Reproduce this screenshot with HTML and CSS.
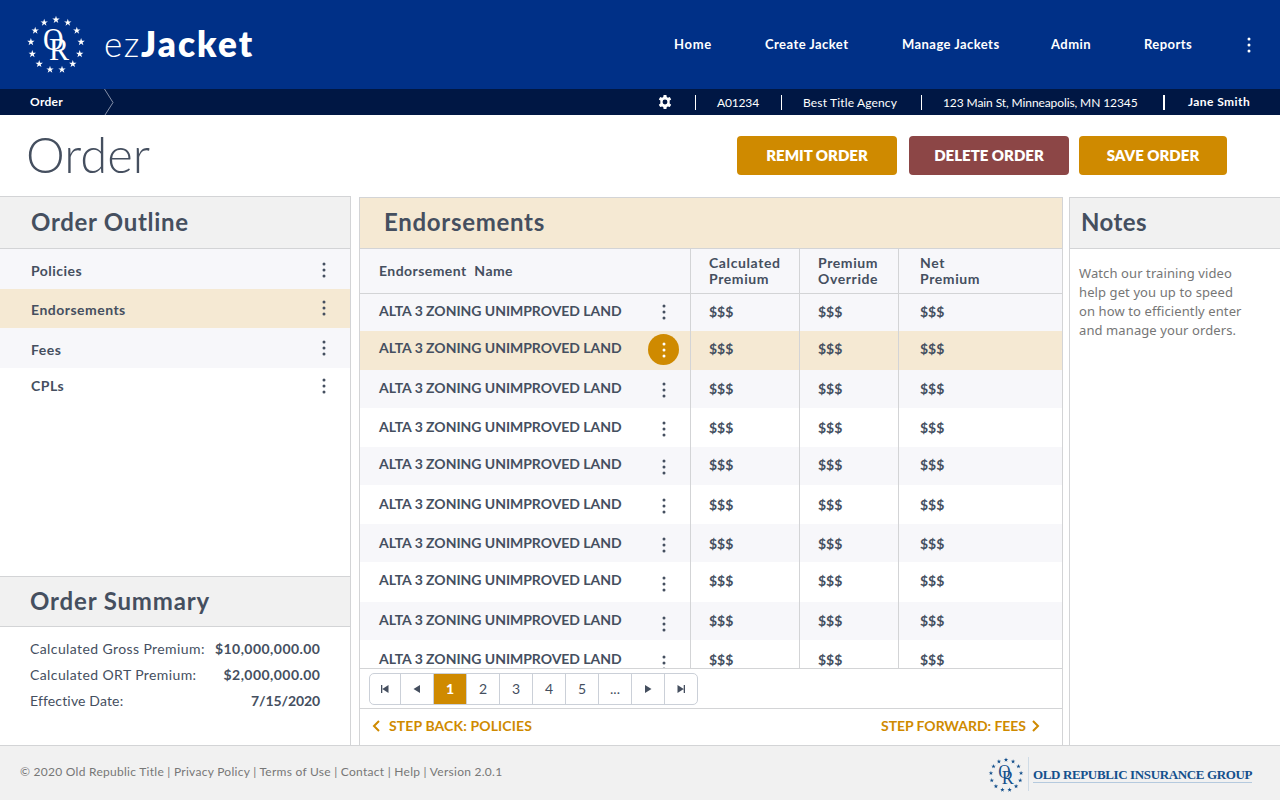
FILE: index.html
```html
<!DOCTYPE html>
<html lang="en">
<head>
<meta charset="utf-8">
<title>ezJacket</title>
<link rel="stylesheet" href="styles.css">
</head>
<body>
<svg class="defs" width="0" height="0">
  <defs>
    <path id="star" d="M0-3.9 .9-1.2 3.7-1.2 1.45 .5 2.3 3.2 0 1.5-2.3 3.2-1.45 .5-3.7-1.2-.9-1.2Z"/>
    <symbol id="seal" viewBox="-30 -30 60 60">
      <use href="#star" x="0" y="-25.3"/>
      <use href="#star" x="11.8" y="-22.4"/><use href="#star" x="-11.8" y="-22.4"/>
      <use href="#star" x="20.8" y="-14.4"/><use href="#star" x="-20.8" y="-14.4"/>
      <use href="#star" x="25.1" y="-3"/><use href="#star" x="-25.1" y="-3"/>
      <use href="#star" x="23.7" y="9"/><use href="#star" x="-23.7" y="9"/>
      <use href="#star" x="16.8" y="18.9"/><use href="#star" x="-16.8" y="18.9"/>
      <use href="#star" x="6" y="24.6"/><use href="#star" x="-6" y="24.6"/>
      <text x="-13" y="4.6" font-size="31" textLength="20.5" lengthAdjust="spacingAndGlyphs">O</text>
      <text x="-7" y="14.8" font-size="31" textLength="20" lengthAdjust="spacingAndGlyphs">R</text>
    </symbol>
    <symbol id="dots" viewBox="0 0 4 16"><circle cx="2" cy="2" r="1.5"/><circle cx="2" cy="8" r="1.5"/><circle cx="2" cy="14" r="1.5"/></symbol>
  </defs>
</svg>

<header class="top">
  <div class="brand">
    <svg class="brand-seal"><use href="#seal"/></svg>
    <div class="wordmark"><span class="ez">ez</span><span class="jacket">Jacket</span></div>
  </div>
  <nav class="nav">
    <a class="home">Home</a><a>Create Jacket</a><a>Manage Jackets</a><a>Admin</a><a>Reports</a>
    <svg class="dots"><use href="#dots"/></svg>
  </nav>
</header>
<div class="subbar">
  <b class="crumb">Order</b>
  <svg class="crumb-arrow" viewBox="0 0 10 26"><path d="M.5 0 9 13.500 1 26"/></svg>
  <svg class="gear" viewBox="0 0 24 24"><path fill-rule="evenodd" d="M9.600 0h4.800l.6 3.300 2 1.200 3.200-1.200 2.400 4.200-2.600 2.100v4.800l2.600 2.100-2.400 4.200-3.200-1.200-2 1.200-.6 3.300H9.600l-.6-3.300-2-1.200-3.200 1.200-2.400-4.200L4 14.400V9.600L1.400 7.500l2.400-4.200L7 4.500l2-1.200zM12 7.800a4.200 4.200 0 1 0 0 8.400 4.200 4.200 0 0 0 0-8.400z"/></svg>
  <div class="info acct">A01234</div>
  <div class="info agency">Best Title Agency</div>
  <div class="info address">123 Main St, Minneapolis, MN 12345</div>
  <b class="info user">Jane Smith</b>
</div>

<section class="titlebar">
  <h1>Order</h1>
  <button class="btn remit">REMIT ORDER</button>
  <button class="btn delete">DELETE ORDER</button>
  <button class="btn save">SAVE ORDER</button>
</section>

<main class="columns">
  <aside class="side">
    <h2 class="outline-title">Order Outline</h2>
    <ul class="outline">
      <li>Policies<svg class="dots"><use href="#dots"/></svg></li>
      <li class="active">Endorsements<svg class="dots"><use href="#dots"/></svg></li>
      <li>Fees<svg class="dots"><use href="#dots"/></svg></li>
      <li>CPLs<svg class="dots"><use href="#dots"/></svg></li>
    </ul>
    <h2 class="summary-title">Order Summary</h2>
    <dl class="summary">
      <dt>Calculated Gross Premium:</dt><dd>$10,000,000.00</dd>
      <dt>Calculated ORT Premium:</dt><dd>$2,000,000.00</dd>
      <dt class="date">Effective Date:</dt><dd class="date">7/15/2020</dd>
    </dl>
  </aside>

  <section class="main">
    <h2 class="main-title">Endorsements</h2>
    <div class="thead">
      <div class="name">Endorsement&nbsp; Name</div>
      <div>Calculated<br>Premium</div>
      <div>Premium<br>Override</div>
      <div>Net<br>Premium</div>
    </div>
    <div class="tbody">
      <div class="row"><div class="name">ALTA 3 ZONING UNIMPROVED LAND<i><svg class="dots"><use href="#dots"/></svg></i></div><div>$$$</div><div>$$$</div><div>$$$</div></div>
      <div class="row active"><div class="name">ALTA 3 ZONING UNIMPROVED LAND<i><svg class="dots"><use href="#dots"/></svg></i></div><div>$$$</div><div>$$$</div><div>$$$</div></div>
      <div class="row"><div class="name">ALTA 3 ZONING UNIMPROVED LAND<i><svg class="dots"><use href="#dots"/></svg></i></div><div>$$$</div><div>$$$</div><div>$$$</div></div>
      <div class="row"><div class="name">ALTA 3 ZONING UNIMPROVED LAND<i><svg class="dots"><use href="#dots"/></svg></i></div><div>$$$</div><div>$$$</div><div>$$$</div></div>
      <div class="row"><div class="name">ALTA 3 ZONING UNIMPROVED LAND<i><svg class="dots"><use href="#dots"/></svg></i></div><div>$$$</div><div>$$$</div><div>$$$</div></div>
      <div class="row"><div class="name">ALTA 3 ZONING UNIMPROVED LAND<i><svg class="dots"><use href="#dots"/></svg></i></div><div>$$$</div><div>$$$</div><div>$$$</div></div>
      <div class="row"><div class="name">ALTA 3 ZONING UNIMPROVED LAND<i><svg class="dots"><use href="#dots"/></svg></i></div><div>$$$</div><div>$$$</div><div>$$$</div></div>
      <div class="row"><div class="name">ALTA 3 ZONING UNIMPROVED LAND<i><svg class="dots"><use href="#dots"/></svg></i></div><div>$$$</div><div>$$$</div><div>$$$</div></div>
      <div class="row"><div class="name">ALTA 3 ZONING UNIMPROVED LAND<i><svg class="dots"><use href="#dots"/></svg></i></div><div>$$$</div><div>$$$</div><div>$$$</div></div>
      <div class="row"><div class="name">ALTA 3 ZONING UNIMPROVED LAND<i><svg class="dots"><use href="#dots"/></svg></i></div><div>$$$</div><div>$$$</div><div>$$$</div></div>
    </div>
    <div class="pager-bar">
      <div class="pager">
        <span><svg viewBox="0 0 8 8"><path d="M0 0h1.300v8H0zM7.500 0v8L1.300 4z"/></svg></span>
        <span><svg viewBox="0 0 8 8"><path d="M7 0v8L.5 4z"/></svg></span>
        <span class="current">1</span><span>2</span><span>3</span><span>4</span><span>5</span><span>...</span>
        <span><svg viewBox="0 0 8 8"><path d="M1 0v8l6.500-4z"/></svg></span>
        <span><svg viewBox="0 0 8 8"><path d="M.5 0v8l6.200-4zM6.700 0H8v8H6.700z"/></svg></span>
      </div>
    </div>
    <div class="steps">
      <a class="back"><svg viewBox="0 0 8 12"><path d="M7 1 2 6l5 5"/></svg>STEP BACK: POLICIES</a>
      <a class="forward">STEP FORWARD: FEES<svg viewBox="0 0 8 12"><path d="M1 1l5 5-5 5"/></svg></a>
    </div>
  </section>

  <aside class="notes">
    <h2>Notes</h2>
    <p>Watch our training video<br>help get you up to speed<br>on how to efficiently enter<br>and manage your orders.</p>
  </aside>
</main>

<footer class="footer">
  <div class="legal">© 2020 Old Republic Title | Privacy Policy | Terms of Use | Contact | Help | Version 2.0.1</div>
  <div class="group">
    <svg class="group-seal"><use href="#seal"/></svg>
    <div class="group-name"><span>OLD REPUBLIC INSURANCE GROUP</span></div>
  </div>
</footer>
</body>
</html>
```
FILE: styles.css
```css
* { box-sizing: border-box; }
body { margin: 0; width: 1280px; height: 800px; overflow: hidden; background: #fff; color: #454f5f; font: 14px/16px Lato, "Open Sans", sans-serif; display: flex; flex-direction: column; }
h1, h2, ul, dl, dd, p { margin: 0; padding: 0; }
.defs { position: absolute; }
svg { display: block; fill: currentColor; }
.dots { width: 4px; height: 16px; }

.top { height: 89px; background: #003087; color: #fff; display: flex; justify-content: space-between; }
.brand { display: flex; padding: 15px 0 0 26px; }
.brand-seal { width: 60px; height: 60px; font-family: "Liberation Serif", serif; }
.wordmark { display: flex; align-items: baseline; padding: 6px 0 0 18px; height: 50px; line-height: 44px; font-size: 35px; }
.ez { font-weight: 300; letter-spacing: 1.6px; }
.jacket { font-weight: 800; letter-spacing: 2.1px; }
.nav { display: grid; grid-template-columns: 91px 137px 149px 93px 103px 33px; align-content: start; padding-top: 36px; font-size: 13px; font-weight: 700; letter-spacing: .44px; }
.home { letter-spacing: .7px; }
.nav .dots { margin-top: 1px; }

.subbar { height: 26px; background: #001744; color: #fff; font-size: 12px; line-height: 26px; display: flex; }
.crumb { width: 104px; padding-left: 30px; letter-spacing: .3px; }
.crumb-arrow { width: 10px; height: 26px; fill: none; stroke: #8590a8; stroke-width: 1; }
.gear { width: 14px; height: 14px; margin: 6px 23px 0 544px; }
.info { height: 15px; margin-top: 6px; border-left: 1px solid #fff; line-height: 15px; padding-left: 21px; white-space: nowrap; }
.acct { width: 86px; letter-spacing: -.16px; }
.agency { width: 140px; letter-spacing: .15px; }
.address { width: 242px; letter-spacing: -.1px; }
.user { border-left-width: 2px; padding-left: 23px; letter-spacing: .42px; line-height: 14px; }

.titlebar { height: 81px; display: flex; padding: 21px 53px 0 26px; }
h1 { flex: 1; font-size: 49px; line-height: 37px; font-weight: 300; }
.btn { height: 39px; width: 160px; border: 0; border-radius: 4px; padding: 0; background: #cf8a00; color: #fff; font: 800 15px/39px Lato, sans-serif; }
.delete { margin: 0 10px 0 12px; background: #8c4646; }
.save { width: 148px; }

.columns { height: 549px; display: flex; }
h2 { font-size: 24px; line-height: 50px; font-weight: 700; letter-spacing: .7px; background: #f1f1f1; border: 0 solid #d3d4d6; border-width: 1px 0; }
.side { width: 351px; border-right: 1px solid #d3d4d6; display: flex; flex-direction: column; }
.outline-title { height: 53px; padding-left: 31px; }
.outline { list-style: none; height: 327px; font-weight: 700; letter-spacing: .48px; display: grid; grid-template-rows: 40px 39px 40px 38px; }
.outline li { display: flex; justify-content: space-between; padding: 14px 24px 0 31px; }
.outline li:nth-child(odd) { background: #f7f7fa; }
.outline li.active { background: #f5e9d3; padding-top: 13px; }
.outline li:nth-child(4) { padding-top: 10px; }
.outline .dots { margin-top: -1px; }
.outline li:nth-child(4) .dots { margin-top: 0; }
.outline li.active .dots, .outline li:nth-child(3) .dots { margin-top: -2px; }
.summary-title { height: 51px; padding-left: 30px; line-height: 47px; letter-spacing: .85px; }
.summary { display: grid; grid-template-columns: auto auto; justify-content: space-between; padding: 14px 30px 0; line-height: 16px; row-gap: 10px; letter-spacing: .4px; }
.summary dd { font-weight: 700; text-align: right; letter-spacing: .45px; margin-right: -.45px; }
.summary dt.date { letter-spacing: .15px; }
.summary dd.date { letter-spacing: -.1px; margin-right: 0; }

.main { width: 704px; margin: 1px 0 0 8px; border: 1px solid #d3d4d6; border-width: 0 1px; display: flex; flex-direction: column; }
.main-title { height: 52px; padding-left: 24px; background: #f5e9d3; line-height: 48px; }
.thead, .row { display: grid; grid-template-columns: 330px 109px 99px 1fr; font-weight: 700; }
.thead > div, .row > div { padding-left: 18px; border-left: 1px solid #d3d4d6; }
.thead > .name, .row > .name { padding-left: 19px; border-left: 0; }
.thead > :last-child, .row > :last-child { padding-left: 21px; }
.thead { height: 45px; background: #f7f7fa; border-bottom: 1px solid #d3d4d6; letter-spacing: .6px; }
.thead > div { padding-top: 6px; }
.thead > .name { padding-top: 14px; letter-spacing: .44px; }
.tbody { height: 374px; overflow: hidden; display: grid; grid-template-rows: 37px 39px 38px 39px 38px 39px 38px 40px 38px 28px; }
.row { --drop: 0px; --dot-drop: 0px; letter-spacing: -.03px; }
.row:nth-child(3), .row:nth-child(8), .row:nth-child(9) { --drop: 1px; }
.row:nth-child(4), .row:nth-child(6), .row:nth-child(7), .row:nth-child(10) { --drop: 2px; }
.row:nth-child(1) { --dot-drop: -1px; }
.row:nth-child(5) { --dot-drop: 1px; }
.row:nth-child(8), .row:nth-child(9), .row:nth-child(10) { --dot-drop: 2px; }
.row:nth-child(odd) { background: #f7f7fa; }
.row.active { background: #f5e9d3; }
.row > div { padding-top: calc(10px + var(--drop)); }
.row > .name { display: flex; justify-content: space-between; padding-top: calc(9px + var(--drop)); padding-right: 11px; }
.row i { width: 31px; height: 31px; display: flex; align-items: center; justify-content: center; margin-top: calc(-6px + var(--dot-drop)); }
.row.active i { border-radius: 50%; background: #cf8a00; color: #fff; }
.pager-bar { height: 41px; border: 1px solid #d3d4d6; border-width: 1px 0; padding: 4px 9px; }
.pager { width: 329px; height: 32px; border: 1px solid #cbd0d8; border-radius: 5px; display: grid; grid-template-columns: 30px repeat(8, 33px) 33px; overflow: hidden; }
.pager span { display: flex; align-items: center; justify-content: center; border-left: 1px solid #cbd0d8; }
.pager span:first-child { border-left: 0; }
.pager .current { background: #cf8a00; color: #fff; font-weight: 900; }
.pager svg { width: 8px; height: 8px; }
.steps { display: flex; justify-content: space-between; padding: 9px 22px 0 12px; color: #cf8a00; font-weight: 700; }
.steps a { display: flex; }
.back { gap: 9px; letter-spacing: .12px; }
.forward { gap: 6px; letter-spacing: -.05px; }
.steps svg { width: 8px; height: 12px; margin-top: 2px; fill: none; stroke: currentColor; stroke-width: 2; }

.notes { flex: 1; margin: 1px 0 0 6px; border-left: 1px solid #d3d4d6; }
.notes h2 { height: 52px; padding-left: 11px; line-height: 48px; letter-spacing: .45px; }
.notes p { padding: 15px 0 0 9px; font: 13px/19px "Noto Sans", sans-serif; letter-spacing: .1px; color: #767676; }

.footer { height: 55px; border-top: 1px solid #d3d4d6; background: #f1f1f1; display: flex; justify-content: space-between; padding: 0 28px 0 20px; color: #777; font-size: 12px; }
.legal { padding-top: 18px; letter-spacing: .27px; }
.group { display: flex; color: #14508c; font-family: "Liberation Serif", serif; }
.group-seal { width: 36px; height: 36px; margin-top: 11px; }
.group-name { margin: 11px 0 0 4px; height: 34px; border-left: 1px solid #cfdbe6; padding: 10px 0 0 4px; font-size: 13px; font-weight: 700; letter-spacing: -.37px; white-space: nowrap; }
.group-name span { display: block; border-bottom: 1px solid #b5cade; line-height: 15px; }
```
